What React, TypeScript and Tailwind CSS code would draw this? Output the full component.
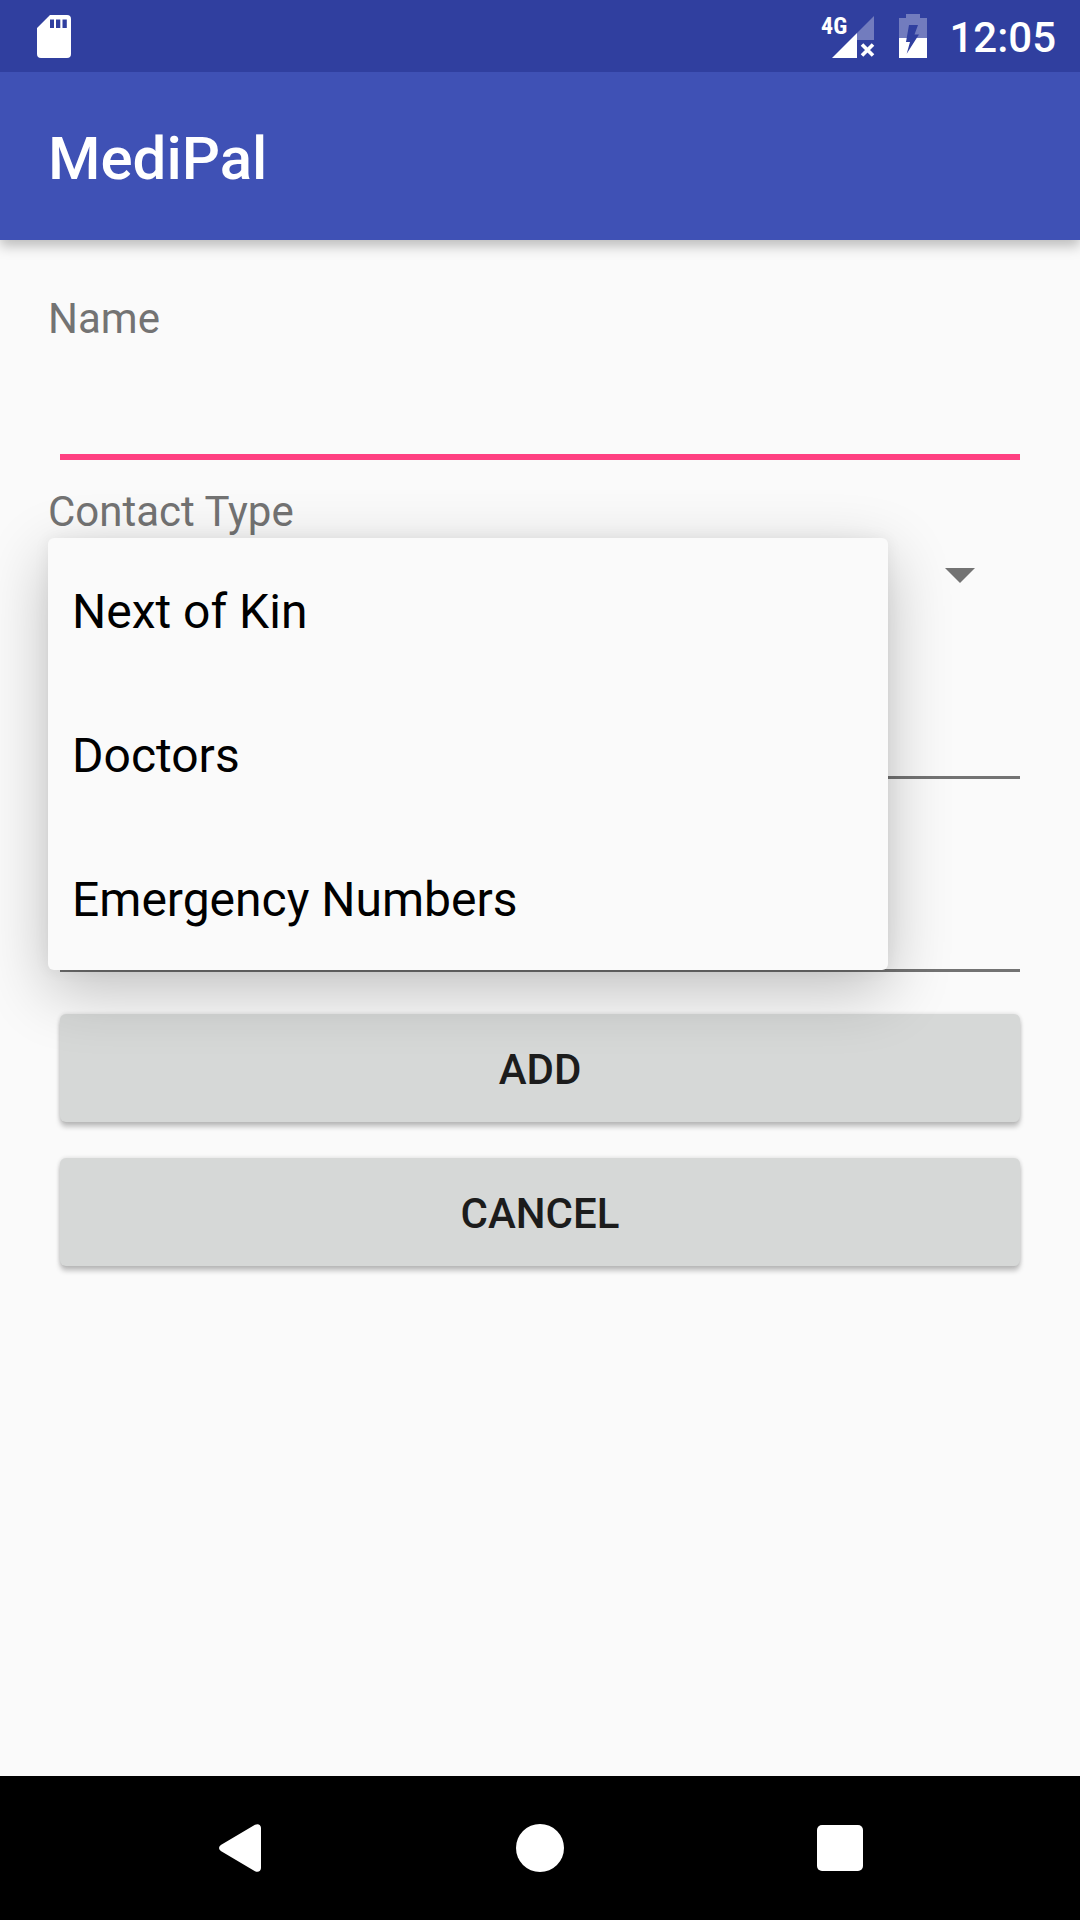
import { useState } from "react";

const CONTACT_TYPES = ["Next of Kin", "Doctors", "Emergency Numbers"];

function SdCardIcon() {
  return (
    <svg width="34" height="43" viewBox="0 0 34 43" aria-hidden="true">
      <path
        fill="#fff"
        fillRule="evenodd"
        d="M13 0H30a4 4 0 0 1 4 4V39a4 4 0 0 1-4 4H4a4 4 0 0 1-4-4V13ZM13 4.500V13h4V4.500ZM19 4.500V13h4.300V4.500ZM25.500 4.500V13h4.300V4.500Z"
      />
    </svg>
  );
}

function SignalIcon() {
  return (
    <svg width="54" height="44" viewBox="0 0 54 44" className="overflow-visible" role="img" aria-label="4G signal, no data">
      <text
        x="0"
        y="20"
        fill="#fff"
        fontSize="24"
        fontWeight="700"
        fontFamily="'Roboto Condensed', 'Liberation Sans Narrow', Roboto, sans-serif"
      >
        4G
      </text>
      <path fill="#fff" fillOpacity="0.32" d="M53 2V26H36V19Z" />
      <path fill="#fff" d="M36 19V44H11Z" />
      <path stroke="#fff" strokeWidth="3.600" d="M41 30.500 52 41.500M52 30.500 41 41.500" />
    </svg>
  );
}

function BatteryIcon() {
  return (
    <svg width="28" height="44" viewBox="0 0 28 44" role="img" aria-label="Battery charging">
      <path
        fill="#fff"
        fillOpacity="0.32"
        fillRule="evenodd"
        d="M7 0H21V4H28V24H17.700L20 20.500H15.500L19 11H10L7.700 24H0V4H7Z"
      />
      <path fill="#fff" fillRule="evenodd" d="M0 24H7.700L7 28H11L7.700 39.700 17.700 24H28V44H0Z" />
    </svg>
  );
}

function StatusBar() {
  return (
    <div className="flex h-[72px] items-center justify-between bg-[#303f9f] pr-6 pl-[37px]">
      <SdCardIcon />
      <div className="flex items-center">
        <SignalIcon />
        <div className="ml-6 flex">
          <BatteryIcon />
        </div>
        <time className="ml-[22px] pt-1 text-[42px] leading-none font-medium text-white">12:05</time>
      </div>
    </div>
  );
}

function NameField() {
  return (
    <div className="flex h-[193px] flex-col">
      <label htmlFor="name" className="text-[42px] leading-[62px] text-[#737373]">
        Name
      </label>
      <input
        id="name"
        type="text"
        className="mx-3 h-[110px] border-b-6 border-[#ff4081] bg-transparent text-[48px] outline-none"
      />
    </div>
  );
}

function TextField({ label }: { label: string }) {
  return (
    <div className="flex h-[193px] flex-col pt-[62px]">
      <input
        type="text"
        aria-label={label}
        className="mx-3 h-[107px] border-b-3 border-[#737373] bg-transparent text-[48px] outline-none"
      />
    </div>
  );
}

function ContactTypeField() {
  const [value, setValue] = useState(CONTACT_TYPES[0]);
  return (
    <div className="relative flex flex-col">
      <label htmlFor="contact-type" className="text-[42px] leading-[62px] text-[#737373]">
        Contact Type
      </label>
      <div className="relative">
        <select
          id="contact-type"
          value={value}
          onChange={(e) => setValue(e.target.value)}
          className="block h-[67px] w-full appearance-none bg-transparent px-6 text-[48px] leading-none text-black outline-none"
        >
          {CONTACT_TYPES.map((t) => (
            <option key={t}>{t}</option>
          ))}
        </select>
        <svg
          width="30"
          height="15"
          viewBox="0 0 30 15"
          className="pointer-events-none absolute top-[25px] right-[57px]"
          aria-hidden="true"
        >
          <path fill="#737373" d="M0 0H30L15 15Z" />
        </svg>
      </div>
      <ul
        role="listbox"
        aria-label="Contact Type"
        className="absolute top-[57px] right-36 left-0 z-10 rounded-md bg-[#fafafa] shadow-[0_20px_64px_rgba(0,0,0,0.24),0_0_16px_rgba(0,0,0,0.06)]"
      >
        {CONTACT_TYPES.map((t) => (
          <li
            key={t}
            role="option"
            aria-selected={t === value}
            onClick={() => setValue(t)}
            className="flex h-36 items-center px-6 pt-1 text-[48px] leading-none text-black"
          >
            {t}
          </li>
        ))}
      </ul>
    </div>
  );
}

function ActionButton({ children }: { children: string }) {
  return (
    <button
      type="button"
      className="mx-3 h-[108px] rounded-md bg-[#d6d8d7] pt-1 text-[42px] leading-none font-medium text-[#1c1c1c] shadow-[0_5px_5px_rgba(0,0,0,0.22),0_0_4px_rgba(0,0,0,0.14)]"
    >
      {children}
    </button>
  );
}

function NavigationBar() {
  return (
    <nav className="grid h-36 grid-cols-3 bg-black px-[90px]">
      <button type="button" aria-label="Back" className="flex items-center justify-center">
        <svg width="42" height="48" viewBox="0 0 42 48" aria-hidden="true">
          <path
            fill="#fff"
            d="M1.800 21 36 .8C39 -.8 42 .8 42 4V44C42 47.200 39 48.800 36 47.200L1.800 27Q-1.800 24 1.800 21Z"
          />
        </svg>
      </button>
      <button type="button" aria-label="Home" className="flex items-center justify-center">
        <span className="size-12 rounded-full bg-white" />
      </button>
      <button type="button" aria-label="Overview" className="flex items-center justify-center">
        <span className="size-[46px] rounded-[5px] bg-white" />
      </button>
    </nav>
  );
}

export default function App() {
  return (
    <div className="flex min-h-screen flex-col bg-[#fafafa] font-['Roboto',sans-serif]">
      <StatusBar />
      <header className="flex h-[168px] items-center bg-[#3f51b5] px-12 pt-[6px] shadow-[0_6px_12px_rgba(0,0,0,0.25)] [clip-path:inset(0_0_-40px_0)]">
        <h1 className="text-[60px] leading-none font-medium text-white">MediPal</h1>
      </header>
      <main className="grow p-12">
        <form className="flex flex-col">
          <NameField />
          <ContactTypeField />
          <TextField label="Contact Number" />
          <TextField label="Description" />
          <div className="mt-[18px] flex flex-col gap-9">
            <ActionButton>ADD</ActionButton>
            <ActionButton>CANCEL</ActionButton>
          </div>
        </form>
      </main>
      <NavigationBar />
    </div>
  );
}
